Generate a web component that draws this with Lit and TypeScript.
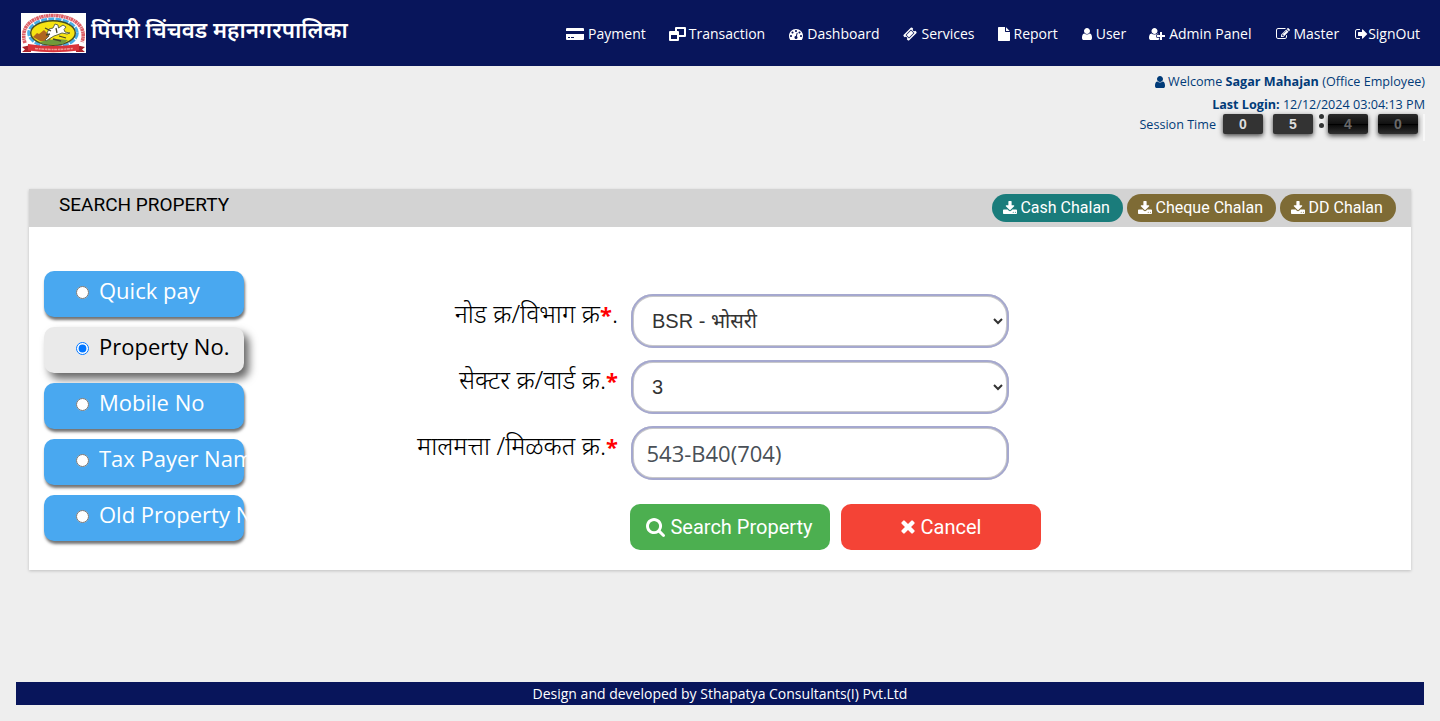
import { LitElement, html, svg, css } from "lit";
import { customElement, property, state } from "lit/decorators.js";
import { classMap } from "lit/directives/class-map.js";
import { styleMap } from "lit/directives/style-map.js";

interface Glyph { vb: string; w: number; h: number; body: unknown; }

const p = (d: string) => svg`<path d=${d}></path>`;
const fa = (w: number, h: number, x: number, y: number, vw: number, vh: number, d: string): Glyph =>
  ({ vb: `${x} ${y} ${vw} ${vh}`, w, h, body: p(d) });

const GLYPHS: Record<string, Glyph> = {
  card: { vb: "0 0 18 12", w: 18, h: 12, body: p("M1 0H17Q18 0 18 1V3H0V1Q0 0 1 0ZM0 6H18V11Q18 12 17 12H1Q0 12 0 11ZM2 9V10H4V9ZM5 9V10H8V9Z") },
  swap: { vb: "0 0 17 14", w: 17, h: 14, body: svg`<path fill-rule="evenodd" d="M7 0H16Q17 0 17 1V9Q17 10 16 10H10V13Q10 14 9 14H1Q0 14 0 13V5Q0 4 1 4H6V1Q6 0 7 0ZM8 2V4H9Q10 4 10 5V8H15V2ZM2 8V12H8V8Z"></path>` },
  gauge: fa(14, 14, 0, 0, 1792, 1792, "M384 1152q0-53-37.5-90.5t-90.5-37.5-90.5 37.5-37.5 90.5 37.5 90.5 90.5 37.5 90.5-37.5 37.5-90.5zm192-448q0-53-37.5-90.5t-90.5-37.5-90.5 37.5-37.5 90.5 37.5 90.5 90.5 37.5 90.5-37.5 37.5-90.5zm428 481l101-382q6-26-7.5-48.5t-38.5-29.5-48 6.5-30 39.5l-101 382q-60 5-107 43.5t-63 98.5q-20 77 20 146t117 89 146-20 89-117q16-60-6-117t-72-91zm660-33q0-53-37.5-90.5t-90.5-37.5-90.5 37.5-37.5 90.5 37.5 90.5 90.5 37.5 90.5-37.5 37.5-90.5zm-640-640q0-53-37.5-90.5t-90.5-37.5-90.5 37.5-37.5 90.5 37.5 90.5 90.5 37.5 90.5-37.5 37.5-90.5zm448 192q0-53-37.5-90.5t-90.5-37.5-90.5 37.5-37.5 90.5 37.5 90.5 90.5 37.5 90.5-37.5 37.5-90.5zm320 448q0 261-141 483-19 29-54 29h-1402q-35 0-54-29-141-221-141-483 0-182 71-348t191-286 286-191 348-71 348 71 286 191 191 286 71 348z"),
  ticket: fa(14, 14, 0, 0, 1792, 1792, "M1024 452l316 316-572 572-316-316zm-211 979l618-618q19-19 19-45t-19-45l-362-362q-18-18-45-18t-45 18l-618 618q-19 19-19 45t19 45l362 362q18 18 45 18t45-18zm889-637l-907 908q-37 37-90.5 37t-90.5-37l-126-126q56-56 56-136t-56-136-136-56-136 56l-125-126q-37-37-37-90.5t37-90.5l907-906q37-37 90.5-37t90.5 37l125 125q-56 56-56 136t56 136 136 56 136-56l126 125q37 37 37 90.5t-37 90.5z"),
  file: fa(12, 14, 128, 0, 1536, 1792, "M1152 512v-472q22 14 36 28l408 408q14 14 28 36h-472zm-128 32q0 40 28 68t68 28h544v1056q0 40-28 68t-68 28h-1344q-40 0-68-28t-28-68v-1600q0-40 28-68t68-28h800v544z"),
  user: fa(10, 14, 256, 0, 1280, 1792, "M1536 1399q0 109-62.5 187t-150.5 78h-854q-88 0-150.5-78t-62.5-187q0-85 8.5-160.5t31.5-152 58.5-131 94-89 134.5-34.5q131 128 313 128t313-128q76 0 134.5 34.5t94 89 58.5 131 31.5 152 8.5 160.5zm-256-887q0 159-112.5 271.5t-271.5 112.5-271.5-112.5-112.5-271.5 112.5-271.5 271.5-112.5 271.5 112.5 112.5 271.5z"),
  userplus: fa(16, 14, 0, 0, 2048, 1792, "M704 896q-159 0-271.5-112.5t-112.5-271.5 112.5-271.5 271.5-112.5 271.5 112.5 112.5 271.5-112.5 271.5-271.5 112.5zm960 128h352q13 0 22.5 9.5t9.5 22.5v192q0 13-9.5 22.5t-22.5 9.5h-352v352q0 13-9.5 22.5t-22.5 9.5h-192q-13 0-22.5-9.5t-9.5-22.5v-352h-352q-13 0-22.5-9.5t-9.5-22.5v-192q0-13 9.5-22.5t22.5-9.5h352v-352q0-13 9.5-22.5t22.5-9.5h192q13 0 22.5 9.5t9.5 22.5v352zm-736 224q0 52 38 90t90 38h256v238q-68 50-171 50h-874q-121 0-194-69t-73-190q0-53 3.5-103.5t14-109 26.5-108.5 43-97.5 62-81 85.5-53.5 111.5-20q19 0 39 17 79 61 154.5 91.5t164.5 30.5 164.5-30.5 154.5-91.5q20-17 39-17 132 0 217 96h-223q-52 0-90 38t-38 90v192z"),
  edit: fa(14, 14, 0, 0, 1792, 1792, "M888 1184l116-116-152-152-116 116v56h96v96h56zm440-720q-16-16-33 1l-350 350q-17 17-1 33t33-1l350-350q17-17 1-33zm80 594v190q0 119-84.5 203.5t-203.5 84.5h-832q-119 0-203.5-84.5t-84.5-203.5v-832q0-119 84.5-203.5t203.5-84.5h832q63 0 117 25 15 7 18 23 3 17-9 29l-49 49q-14 14-32 8-23-6-45-6h-832q-66 0-113 47t-47 113v832q0 66 47 113t113 47h832q66 0 113-47t47-113v-126q0-13 9-22l64-64q15-15 35-7t20 29zm-96-738l288 288-672 672h-288v-288zm444 132l-92 92-288-288 92-92q28-28 68-28t68 28l152 152q28 28 28 68t-28 68z"),
  signout: fa(13, 14, 64, 0, 1664, 1792, "M704 1440q0 4 1 20t.5 26.5-3 23.5-10 19.5-20.5 6.5h-320q-119 0-203.5-84.5t-84.5-203.5v-704q0-119 84.5-203.5t203.5-84.5h320q13 0 22.5 9.5t9.5 22.5q0 4 1 20t.5 26.5-3 23.5-10 19.5-20.5 6.5h-320q-66 0-113 47t-47 113v704q0 66 47 113t113 47h312l11.5 1 11.5 3 8 5.5 7 9 2 13.5zm928-544q0 26-19 45l-544 544q-19 19-45 19t-45-19-19-45v-288h-448q-26 0-45-19t-19-45v-384q0-26 19-45t45-19h448v-288q0-26 19-45t45-19 45 19l544 544q19 19 19 45z"),
  download: fa(14, 14, 64, 0, 1664, 1664, "M1344 1344q0-26-19-45t-45-19-45 19-19 45 19 45 45 19 45-19 19-45zm256 0q0-26-19-45t-45-19-45 19-19 45 19 45 45 19 45-19 19-45zm128-224v320q0 40-28 68t-68 28h-1472q-40 0-68-28t-28-68v-320q0-40 28-68t68-28h465l135 136q58 56 136 56t136-56l136-136h464q40 0 68 28t28 68zm-325-569q17 41-14 70l-448 448q-18 19-45 19t-45-19l-448-448q-31-29-14-70 17-39 59-39h256v-448q0-26 19-45t45-19h256q26 0 45 19t19 45v448h256q42 0 59 39z"),
  search: fa(19, 19, 64, 128, 1664, 1664, "M1216 832q0-185-131.5-316.5t-316.5-131.5-316.5 131.5-131.5 316.5 131.5 316.5 316.5 131.5 316.5-131.5 131.5-316.5zm512 832q0 52-38 90t-90 38q-54 0-90-38l-343-342q-179 124-399 124-143 0-273.5-55.5t-225-150-150-225-55.5-273.5 55.5-273.5 150-225 225-150 273.5-55.5 273.5 55.5 225 150 150 225 55.5 273.5q0 220-124 399l343 343q37 37 37 90z"),
  times: fa(16, 20, 192, 64, 1408, 1792, "M1490 1322q0 40-28 68l-136 136q-28 28-68 28t-68-28l-294-294-294 294q-28 28-68 28t-68-28l-136-136q-28-28-28-68t28-68l294-294-294-294q-28-28-28-68t28-68l136-136q28-28 68-28t68 28l294 294 294-294q28-28 68-28t68 28l136 136q28 28 28 68t-28 68l-294 294 294 294q28 28 28 68z"),
};

@customElement("fa-icon")
export class FaIcon extends LitElement {
  @property() name = "user";
  static styles = css`
    :host { display: inline-flex; flex: none; }
    svg { display: block; fill: currentColor; overflow: visible; }
  `;
  render() {
    const g = GLYPHS[this.name];
    return html`<svg width=${g.w} height=${g.h} viewBox=${g.vb} aria-hidden="true">${g.body}</svg>`;
  }
}

@customElement("city-emblem")
export class CityEmblem extends LitElement {
  static styles = css`:host { display: block; } svg { display: block; }`;
  render() {
    return html`<svg width="65" height="40" viewBox="0 0 65 40" aria-hidden="true">
      <rect width="65" height="40" fill="#fff"></rect>
      <path d="M4 30C-2 12 14 2.500 32 2.500S67 12 61 29" fill="none" stroke="#dd5f66" stroke-width="3.600" stroke-dasharray="2.600 .5 1.500 .4"></path>
      <ellipse cx="32" cy="20" rx="25.500" ry="14.500" fill="#fff"></ellipse>
      <ellipse cx="32" cy="20" rx="24.300" ry="13.900" fill="none" stroke="#4aaee6" stroke-width="3" stroke-dasharray="6 1.200"></ellipse>
      <ellipse cx="32" cy="20" rx="22.300" ry="12.300" fill="#f6e413" stroke="#454d24" stroke-width="1.400"></ellipse>
      <path d="M12 24L16 20 18 21 23 17 27 21 30 23 29 28 19 28Z" fill="#b0661f"></path>
      <path d="M18 29Q31 25 47 27L42 31Q31 32 22 31Z" fill="#6f9a3c"></path>
      <path d="M26 20L28 16 32 15 34 11 37 12 37.500 15 42 12 45 14 43 16.500 44 19 49 20 46 21 41 20 36 22 33 23 28 26 25 28 24 27 28 23Z" fill="#fff" stroke="#555b3c" stroke-width=".9"></path>
      <path d="M38 23L45 25M30 18L24 15M32 26L40 28M35 15L36 20M25 22L29 21" stroke="#46452c" stroke-width="1.300"></path>
      <path d="M1 34L10 32V39H1L4 36.500ZM64 34L55 32V39H64L61 36.500Z" fill="#a9222a"></path>
      <path d="M7 31Q32 35 58 31V37.500Q32 41 7 37.500Z" fill="#d8343a"></path>
      <path d="M14 35.500Q32 37.500 52 35.500" fill="none" stroke="#f09a94" stroke-width="1.600" stroke-dasharray="3 .8 2 .6"></path>
    </svg>`;
  }
}

const NAV = [
  { icon: "card", label: "Payment", gap: 4, after: 23 },
  { icon: "swap", label: "Transaction", gap: 3, after: 24 },
  { icon: "gauge", label: "Dashboard", gap: 4, after: 24 },
  { icon: "ticket", label: "Services", gap: 4, after: 23 },
  { icon: "file", label: "Report", gap: 4, after: 24 },
  { icon: "user", label: "User", gap: 4, after: 23 },
  { icon: "userplus", label: "Admin Panel", gap: 4, after: 24 },
  { icon: "edit", label: "Master", gap: 4, after: 16 },
  { icon: "signout", label: "SignOut", gap: 0, after: 0 },
];

@customElement("app-root")
export class AppRoot extends LitElement {
  @state() private mode = "Property No.";

  static styles = css`
    * { box-sizing: border-box; }
    :host { display: flex; flex-direction: column; height: 721px; background: #eee; font-family: "Open Sans", "Noto Sans", sans-serif; overflow: hidden; }
    header { flex: none; height: 66px; background: #08155b; color: #fff; display: flex; align-items: flex-start; padding: 0 20px 0 21px; }
    .emblem { margin-top: 13px; }
    .brand { margin: 13px 0 0 5px; font: 600 22.3px/34px "Noto Sans", sans-serif; white-space: nowrap; }
    nav { display: flex; margin-left: auto; font-size: 14px; line-height: 20px; padding-top: 24px; white-space: nowrap; }
    nav a { display: flex; align-items: center; }
    .session { flex: none; height: 123px; padding: 6px 15px 0 0; display: flex; flex-direction: column; align-items: flex-end; color: #013b78; font-size: 12.6px; line-height: 20px; }
    .line { display: flex; align-items: center; gap: 3px; white-space: pre; }
    .line.last { margin-top: 3px; }
    .timer { display: flex; align-items: flex-start; border-right: 2px solid #f8f8f8; padding-right: 5px; height: 27px; margin-top: -1px; }
    .timer .cap { margin: 1px 7px 0 0; }
    .digit { width: 40px; height: 20px; border-radius: 2px; background: #333; color: #ddd; font: bold 14px/20px "Liberation Sans", sans-serif; text-align: center; box-shadow: 0 2px 5px rgba(0,0,0,.7); margin-right: 10px; }
    .digit.flip { background: linear-gradient(#2b2b2b 0, #111 48%, #000 48%, #000 54%, #090909 54%, #303030 100%); color: #686868; }
    .digit.end { margin-right: 0; }
    .colon { display: flex; flex-direction: column; gap: 4px; width: 5px; margin: 0 4px 0 -4px; }
    .colon i { width: 5px; height: 5px; border-radius: 50%; background: #323434; }
    .panel { flex: none; margin: 0 29px; height: 381px; background: #fff; box-shadow: 0 1px 3px rgba(0,0,0,.2); }
    .panel-head { height: 38px; background: #d3d3d3; display: flex; padding: 5px 15px 0 30px; font-family: Roboto, sans-serif; }
    h2 { margin: -3px auto 0 0; font-size: 19px; line-height: 27px; font-weight: 400; color: #000; }
    .chip { height: 28px; border-radius: 14px; background: #7e6b35; color: #fff; font-size: 16px; display: flex; align-items: center; gap: 3.500px; padding: 0 13.1px 2px 11px; margin-left: 4px; white-space: nowrap; }
    .chip fa-icon { margin-top: 2px; }
    .chip.teal { background: #1a7c7b; }
    .panel-body { display: flex; padding: 44px 15px 0; }
    .modes { width: 203px; display: flex; flex-direction: column; gap: 10px; }
    .mode { width: 200px; height: 46px; border-radius: 10px; background: #49a8f0; box-shadow: 1px 3px 3px rgba(0,0,0,.55); color: #fff; display: flex; font-size: 22px; line-height: 30px; padding: 4px 0 0 32px; white-space: nowrap; }
    .mode.on { background: #eaeaea; color: #000; box-shadow: 5px 6px 8px rgba(0,0,0,.6); }
    .mode input { width: 13px; height: 13px; margin: 11px 10px 0 0; flex: none; }
    .mode span { width: 148px; overflow: hidden; flex: none; }
    form { margin: 23px 0 0 0; width: 800px; display: flex; flex-direction: column; }
    .field { height: 66px; display: flex; }
    label { width: 371px; text-align: right; font: 300 25px/30px "Noto Sans", sans-serif; color: #000; padding-top: 4px; margin-right: 13px; white-space: nowrap; }
    label b { color: #f00; font-weight: 700; font-size: 22px; }
    .ctl { width: 378px; height: 54px; border: 3px solid #c8c8ca; outline: 2px solid #a5a8cf; outline-offset: -2px; border-radius: 22px; background: #fff; color: #333; margin: 0; }
    select.ctl { font: 20px "Liberation Sans", "Noto Sans", sans-serif; padding: 0 1px 0 14px; }
    input.ctl { font: 22px "Open Sans", sans-serif; color: #495057; padding: 0 13px 1px 12.500px; }
    .actions { display: flex; gap: 11px; margin: 12px 0 0 383px; }
    .btn { width: 200px; height: 46px; border: 0; border-radius: 10px; color: #fff; background: #4caf50; font: 20px Roboto, sans-serif; display: flex; align-items: center; justify-content: center; gap: 5px; padding: 0 1px 0 0; }
    .btn.red { background: #f44336; }
    footer { flex: none; height: 23px; margin: 112px 16px 0; background: #08155b; color: #fff; font-size: 14px; line-height: 23px; text-align: center; }
  `;

  private field(text: unknown, control: unknown) {
    return html`<div class="field"><label>${text}</label>${control}</div>`;
  }

  render() {
    const modes = ["Quick pay", "Property No.", "Mobile No", "Tax Payer Name", "Old Property No"];
    return html`
      <header>
        <city-emblem class="emblem"></city-emblem>
        <div class="brand">पिंपरी चिंचवड महानगरपालिका</div>
        <nav>${NAV.map((n) => html`<a style=${styleMap({ gap: `${n.gap}px`, marginRight: `${n.after}px` })}><fa-icon name=${n.icon}></fa-icon><span>${n.label}</span></a>`)}</nav>
      </header>
      <section class="session">
        <div class="line"><fa-icon name="user"></fa-icon><span>Welcome <b>Sagar Mahajan</b> (Office Employee)</span></div>
        <div class="line last"><span><b>Last Login:</b> 12/12/2024 03:04:13 PM</span></div>
        <div class="timer">
          <span class="cap">Session Time</span>
          <span class="digit">0</span><span class="digit">5</span>
          <span class="colon"><i></i><i></i></span>
          <span class="digit flip">4</span><span class="digit flip end">0</span>
        </div>
      </section>
      <main class="panel">
        <div class="panel-head">
          <h2>SEARCH PROPERTY</h2>
          <a class="chip teal"><fa-icon name="download"></fa-icon>Cash Chalan</a>
          <a class="chip"><fa-icon name="download"></fa-icon>Cheque Chalan</a>
          <a class="chip"><fa-icon name="download"></fa-icon>DD Chalan</a>
        </div>
        <div class="panel-body">
          <div class="modes">${modes.map((m) => html`
            <div class=${classMap({ mode: true, on: this.mode === m })} @click=${() => (this.mode = m)}>
              <input type="radio" name="mode" .checked=${this.mode === m}><span>${m}</span>
            </div>`)}</div>
          <form @submit=${(e: Event) => e.preventDefault()}>
            ${this.field(html`नोड क्र/विभाग क्र<b>*</b>.`, html`<select class="ctl"><option>BSR - भोसरी</option></select>`)}
            ${this.field(html`सेक्टर क्र/वार्ड क्र.<b>*</b>`, html`<select class="ctl"><option>3</option></select>`)}
            ${this.field(html`मालमत्ता /मिळकत क्र.<b>*</b>`, html`<input class="ctl" type="text" value="543-B40(704)">`)}
            <div class="actions">
              <button class="btn"><fa-icon name="search"></fa-icon>Search Property</button>
              <button class="btn red"><fa-icon name="times"></fa-icon>Cancel</button>
            </div>
          </form>
        </div>
      </main>
      <footer>Design and developed by Sthapatya Consultants(I) Pvt.Ltd</footer>
    `;
  }
}
